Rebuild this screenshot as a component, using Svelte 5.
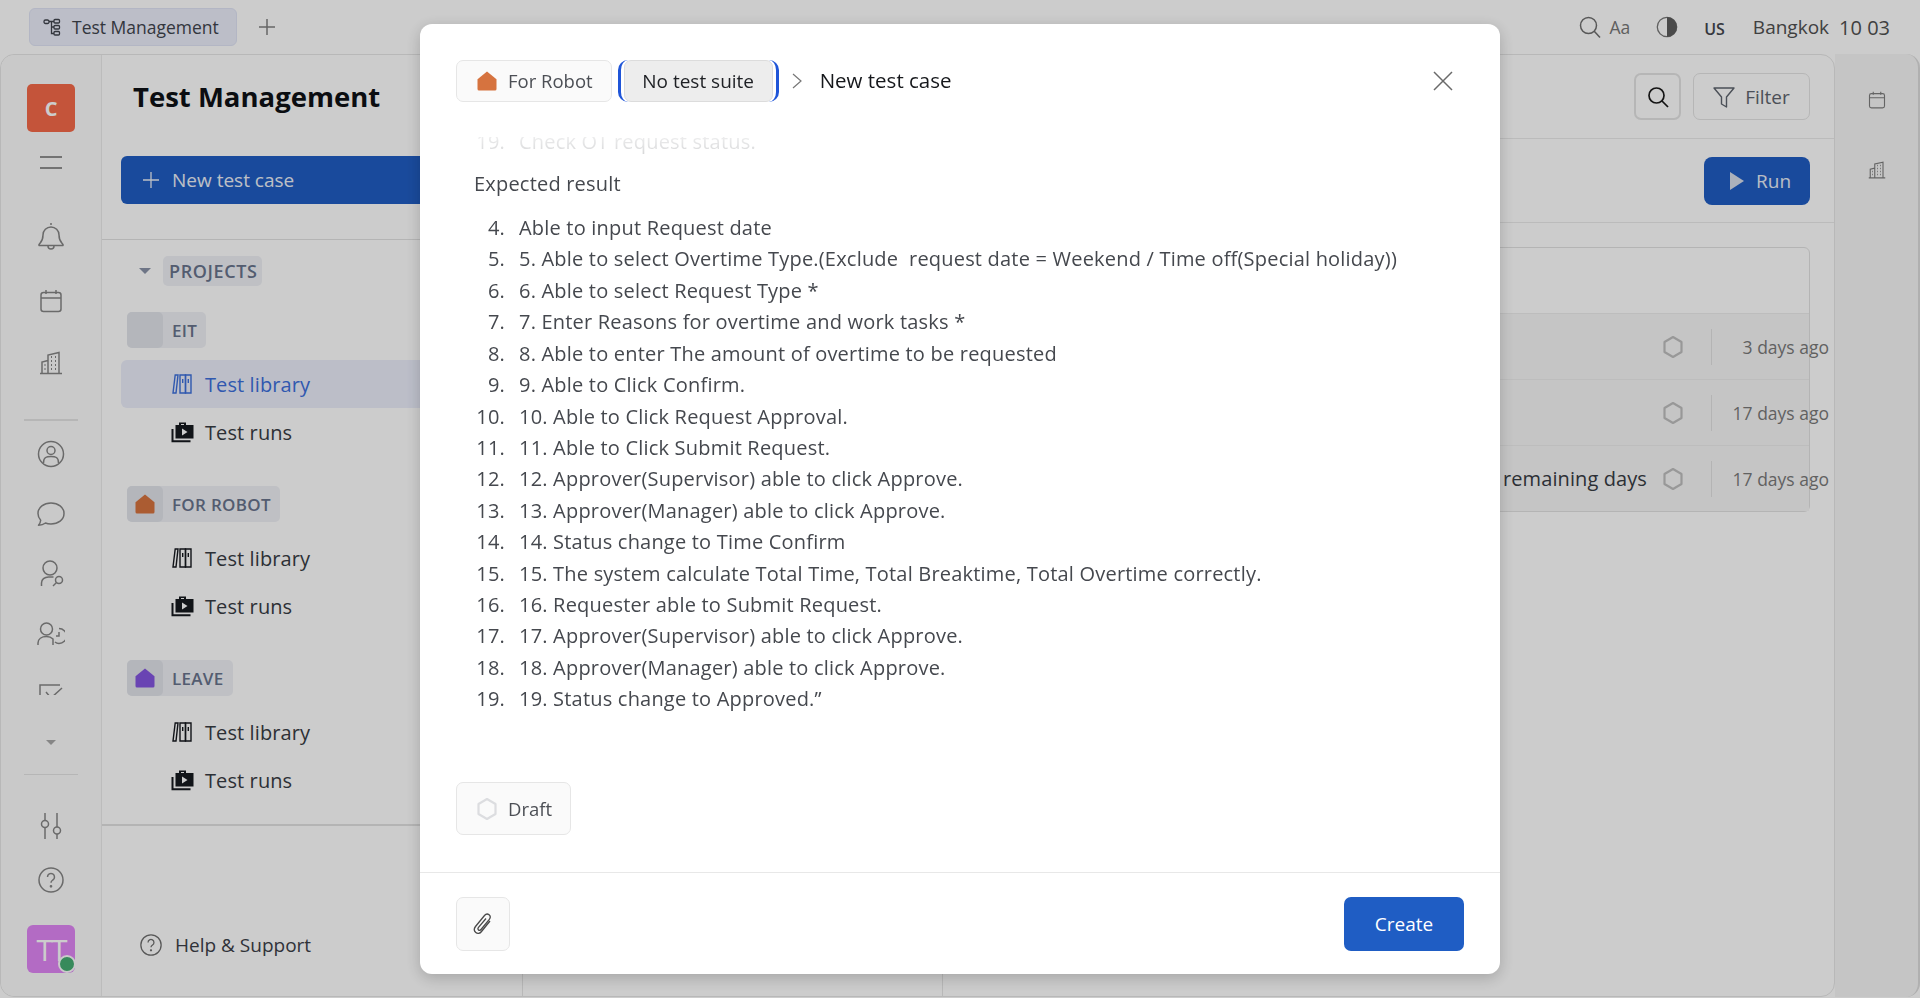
<script>
  const results = [
    'Able to input Request date',
    '5. Able to select Overtime Type.(Exclude\u00a0 request date = Weekend / Time off(Special holiday))',
    '6. Able to select Request Type *',
    '7. Enter Reasons for overtime and work tasks *',
    '8. Able to enter The amount of overtime to be requested',
    '9. Able to Click Confirm.',
    '10. Able to Click Request Approval.',
    '11. Able to Click Submit Request.',
    '12. Approver(Supervisor) able to click Approve.',
    '13. Approver(Manager) able to click Approve.',
    '14. Status change to Time Confirm',
    '15. The system calculate Total Time, Total Breaktime, Total Overtime correctly.',
    '16. Requester able to Submit Request.',
    '17. Approver(Supervisor) able to click Approve.',
    '18. Approver(Manager) able to click Approve.',
    '19. Status change to Approved.”'
  ];

  const projects = [
    { name: 'EIT', color: null, active: true },
    { name: 'FOR ROBOT', color: '#d6733f', active: false },
    { name: 'LEAVE', color: '#8456e0', active: false }
  ];

  const rows = [
    { title: '', age: '3 days ago' },
    { title: '', age: '17 days ago' },
    { title: 'remaining days', age: '17 days ago' }
  ];
</script>

{#snippet house(color, size)}
  <svg width={size} height={size} viewBox="0 0 20 20"><path d="M10 .5 19.5 8.2V18a1.5 1.5 0 0 1-1.5 1.5H2A1.5 1.5 0 0 1 .5 18V8.2Z" fill={color} /></svg>
{/snippet}

{#snippet hexagon(size, color)}
  <svg width={size} height={size} viewBox="0 0 24 24" fill="none" stroke={color} stroke-width="2.2"><path d="M12 2 20.5 7v10L12 22l-8.500-5V7Z" stroke-linejoin="round" /></svg>
{/snippet}

{#snippet library()}
  <svg width="22" height="22" viewBox="0 0 22 22" fill="none" stroke="currentColor" stroke-width="1.4"><path d="M2 20 4.200 2H7L5 20Z" /><path d="M9 2h5.500v18H9Z" /><path d="M14.500 2H20v18h-5.500Z" /><path d="M11.700 6v4M17.300 6v4" /></svg>
{/snippet}

{#snippet runs()}
  <svg width="24" height="22" viewBox="0 0 24 22"><path d="M1.500 8v12.300h18" fill="none" stroke="currentColor" stroke-width="2" /><path d="M8 4V1.500h7V4h7.500v13.500H4.500V4Zm2-1V4h3V3Z" fill="currentColor" fill-rule="evenodd" /><path d="M11 7.500 16.500 11 11 14.500Z" fill="#fff" /></svg>
{/snippet}

{#snippet calendar(size)}
  <svg width={size} height={size} viewBox="0 0 24 24" fill="none" stroke="currentColor" stroke-width="1.5"><rect x="2" y="3.500" width="20" height="19" rx="2.500" /><path d="M2 9h20M7 1v4M17 1v4" /></svg>
{/snippet}

{#snippet building(size)}
  <svg width={size} height={size} viewBox="0 0 24 24" fill="none" stroke="currentColor" stroke-width="1.5"><path d="M1 22.500h22M3 22.500V11l6-1.500M9 22.500V4l11-2.500v21" /><path d="M12 6h1M16 6h1M12 10h1M16 10h1M12 14h1M16 14h1M12 18h1M16 18h1M5.500 14h1M5.500 18h1" stroke-width="1.800" /></svg>
{/snippet}

{#snippet help(size)}
  <svg width={size} height={size} viewBox="0 0 26 26" fill="none" stroke="currentColor" stroke-width="1.500"><circle cx="13" cy="13" r="12" /><path d="M9.500 10a3.500 3.500 0 1 1 5.300 3c-1.200.8-1.800 1.400-1.800 2.800" /><circle cx="13" cy="19.300" r=".6" fill="currentColor" /></svg>
{/snippet}

<div class="page">
  <header class="topbar">
    <div class="tab">
      <svg width="18" height="18" viewBox="0 0 18 18" fill="none" stroke="currentColor" stroke-width="1.300"><rect x="1" y="2" width="5" height="3.500" rx="1.500" /><rect x="11" y="1.500" width="5.500" height="3.500" rx="1" /><rect x="11" y="7.500" width="5.500" height="3.500" rx="1" /><rect x="11" y="13.500" width="5.500" height="3.500" rx="1" /><path d="M6 3.500h5M8.500 3.500v12h2.500M8.500 9h2.500" /></svg>
      <span>Test Management</span>
    </div>
    <svg class="add-tab" width="16" height="16" viewBox="0 0 16 16" stroke="currentColor" stroke-width="1.500"><path d="M8 0v16M0 8h16" /></svg>
    <div class="top-tools">
      <svg class="tool-search" width="22" height="22" viewBox="0 0 22 22" fill="none" stroke="currentColor" stroke-width="1.500"><circle cx="9.500" cy="9.500" r="8" /><path d="m15 15 6 6.500" /></svg>
      <span class="aa">Aa</span>
      <svg class="contrast" width="22" height="22" viewBox="0 0 22 22"><circle cx="11" cy="11" r="9.700" fill="none" stroke="#777" stroke-width="1.300" /><path d="M11 1a10 10 0 0 1 0 20Z" fill="#5d5d5d" /></svg>
      <span class="lang">US</span>
      <span class="city">Bangkok</span>
      <span class="clock">10 03</span>
    </div>
  </header>

  <div class="workspace">
    <div class="main-panel">
      <nav class="rail">
        <div class="logo">C</div>
        <div class="burger"><i></i><i></i></div>

        <div class="rail-scroll">
          <div class="rail-item">
            <svg width="26" height="28" viewBox="0 0 26 28" fill="none" stroke="currentColor" stroke-width="1.500"><path d="M13 1v2M5 13a8 8 0 0 1 16 0c0 6 2 7 4 9.500v1H1v-1C3 20 5 19 5 13Z" stroke-linejoin="round" /><path d="M10 24a3 3 0 0 0 6 0" /></svg>
          </div>
          <div class="rail-item cal">{@render calendar(24)}</div>
          <div class="rail-item bld">{@render building(24)}</div>
          <div class="rail-sep thick"></div>
          <div class="rail-item">
            <svg width="28" height="28" viewBox="0 0 28 28" fill="none" stroke="currentColor" stroke-width="1.500"><circle cx="14" cy="14" r="12.500" /><circle cx="14" cy="10.500" r="4" /><path d="M6.500 23c0-6 3-6.500 7.500-6.500s7.500.5 7.500 6.500" /></svg>
          </div>
          <div class="rail-item">
            <svg width="28" height="26" viewBox="0 0 28 26" fill="none" stroke="currentColor" stroke-width="1.500"><path d="M14 2c7 0 13 4 13 10.500S21 23 14 23c-2 0-4-.3-5.500-1-1.500 1.200-4 2.300-7 2.300 1.300-1.500 2-3 2.200-5C2 17.500 1 15 1 12.500 1 6 7 2 14 2Z" stroke-linejoin="round" /></svg>
          </div>
          <div class="rail-item">
            <svg width="26" height="28" viewBox="0 0 26 28" fill="none" stroke="currentColor" stroke-width="1.500"><circle cx="12" cy="8" r="7" /><path d="M3.500 26v-3c0-3.500 3-6 7-6h5" /><circle cx="21" cy="20" r="3.500" /><path d="m18.500 22.500-3.500 3.500" /></svg>
          </div>
          <div class="rail-item">
            <svg width="28" height="24" viewBox="0 0 28 24" fill="none" stroke="currentColor" stroke-width="1.500"><circle cx="9.500" cy="7" r="6" /><path d="M1 23v-2c0-4 3.500-6.500 8.500-6.500 3 0 5 1 6.500 2.500v6" /><path d="M22 6.500a6.500 6.500 0 1 1 0 15 6 6 0 0 1-4-1.500M22 10v4h-3" /></svg>
          </div>
          <div class="rail-item">
            <svg width="26" height="24" viewBox="0 0 26 24" fill="none" stroke="currentColor" stroke-width="1.500"><path d="M2 22V3h20M8 10l5 6 11-10" /></svg>
          </div>
        </div>

        <span class="caret small"></span>
        <div class="rail-sep"></div>
        <div class="rail-item sliders">
          <svg width="24" height="28" viewBox="0 0 24 28" fill="none" stroke="currentColor" stroke-width="1.500"><path d="M6 1v8M6 15v12M18 1v14M18 22v5" /><circle cx="6" cy="12" r="3.500" /><circle cx="18" cy="18.500" r="3.500" /></svg>
        </div>
        <div class="rail-item helpme">{@render help(26)}</div>
        <div class="avatar">TT<span class="online"></span></div>
      </nav>

      <aside class="sidebar">
        <div class="sidebar-top">
          <h1>Test Management</h1>
          <button class="new-case">
            <svg width="16" height="16" viewBox="0 0 16 16" stroke="currentColor" stroke-width="1.300"><path d="M8 0v16M0 8h16" /></svg>
            New test case
          </button>
        </div>
        <div class="tree">
          <div class="projects-head">
            <span class="caret"></span>
            <span class="projects-tag">PROJECTS</span>
          </div>
          {#each projects as project}
            <div class="project">
              <div class="project-tag">
                <span class="project-icon">
                  {#if project.color}{@render house(project.color, 20)}{/if}
                </span>
                <span>{project.name}</span>
              </div>
              <div class="tree-item" class:active={project.active}>
                <span class="tree-icon">{@render library()}</span>
                Test library
              </div>
              <div class="tree-item">
                <span class="tree-icon">{@render runs()}</span>
                Test runs
              </div>
            </div>
          {/each}
        </div>
        <div class="sidebar-foot">
          <span class="foot-icon">{@render help(22)}</span>
          Help &amp; Support
        </div>
      </aside>

      <section class="suites"></section>

      <section class="detail">
        <div class="detail-head">
          <button class="icon-btn">
            <svg width="22" height="22" viewBox="0 0 22 22" fill="none" stroke="currentColor" stroke-width="1.700"><circle cx="9.500" cy="9.500" r="7.500" /><path d="m15 15 6 6" /></svg>
          </button>
          <button class="filter-btn">
            <svg width="22" height="22" viewBox="0 0 22 22" fill="none" stroke="currentColor" stroke-width="1.400"><path d="M1 2h20l-7.500 9v10l-5-3v-7Z" stroke-linejoin="round" /></svg>
            Filter
          </button>
        </div>
        <div class="run-bar">
          <button class="run-btn">
            <svg width="16" height="18" viewBox="0 0 16 18"><path d="M1 0 15 9 1 18Z" fill="#d8deea" /></svg>
            Run
          </button>
        </div>
        <div class="cases">
          <div class="cases-head"></div>
          {#each rows as row}
            <div class="case-row">
              <span class="case-title">{row.title}</span>
              <span class="case-state">{@render hexagon(24, '#bfbfbf')}</span>
              <span class="case-age">{row.age}</span>
            </div>
          {/each}
        </div>
      </section>
    </div>

    <aside class="right-rail">
      <span class="right-icon">{@render calendar(18)}</span>
      <span class="right-icon">{@render building(18)}</span>
    </aside>
  </div>
</div>

<div class="backdrop"></div>

<div class="modal">
  <header class="modal-head">
    <div class="chip">
      {@render house('#d6733f', 20)}
      For Robot
    </div>
    <div class="suite-focus"><div class="chip suite">No test suite</div></div>
    <svg class="crumb-sep" width="10" height="16" viewBox="0 0 10 16" fill="none" stroke="currentColor" stroke-width="1.200"><path d="m1 1 8 7-8 7" /></svg>
    <span class="crumb">New test case</span>
    <svg class="close" width="20" height="20" viewBox="0 0 20 20" stroke="currentColor" stroke-width="1.500"><path d="m1 1 18 18M19 1 1 19" /></svg>
  </header>

  <div class="modal-body">
    <div class="fade"></div>
    <div class="body-scroll">
      <ol class="prev"><li><span class="num">19.</span>Check OT request status.</li></ol>
      <p class="label">Expected result</p>
      <ol>
        {#each results as line, i}
          <li><span class="num">{i + 4}.</span>{line}</li>
        {/each}
      </ol>
    </div>
    <div class="chip draft">
      {@render hexagon(24, '#dcdde0')}
      Draft
    </div>
  </div>

  <footer class="modal-foot">
    <button class="attach">
      <svg width="22" height="24" viewBox="0 0 22 24" fill="none" stroke="currentColor" stroke-width="1.300"><path d="M18 9 9.500 19.500c-1.500 2-4 2.500-5.700 1-1.800-1.500-1.800-4-.3-6L12.500 3.500c1.300-1.500 3.200-1.800 4.600-.7 1.400 1.200 1.400 3 .2 4.600L9 17.500c-.7.900-1.800 1-2.500.4-.7-.6-.7-1.600 0-2.500L14 6.500" /></svg>
    </button>
    <button class="create">Create</button>
  </footer>
</div>

<style>
  :global(body) {
    margin: 0;
    font-family: "Open Sans", "Liberation Sans", sans-serif;
    color: #3c4048;
  }
  button {
    font-family: inherit;
    cursor: pointer;
  }
  .page {
    display: flex;
    flex-direction: column;
    height: 997px;
    width: 1920px;
    background: #fff;
    overflow: hidden;
  }
  .topbar {
    display: flex;
    align-items: center;
    height: 54px;
    flex: none;
    padding-left: 29px;
  }
  .tab {
    display: flex;
    align-items: center;
    gap: 11px;
    width: 208px;
    height: 38px;
    box-sizing: border-box;
    padding-left: 13px;
    border: 1px solid #e0e4f6;
    border-radius: 6px;
    background: #ebeefb;
    font-size: 17.500px;
    font-weight: 500;
    color: #40444d;
  }
  .add-tab {
    margin-left: 22px;
    color: #808080;
  }
  .top-tools {
    display: flex;
    align-items: center;
    margin-left: auto;
    padding-right: 30px;
    color: #6e6e6e;
  }
  .aa {
    margin-left: 8px;
    font-size: 17.500px;
    color: #777;
  }
  .contrast {
    margin-left: 26px;
  }
  .lang {
    margin-left: 26px;
    margin-top: 4px;
    font-size: 16px;
    font-weight: 600;
    color: #44474e;
  }
  .city {
    margin-left: 28px;
    font-size: 19px;
    color: #505050;
  }
  .clock {
    margin-left: 10px;
    font-size: 20px;
    color: #505050;
  }
  .workspace {
    display: flex;
    flex: 1;
    min-height: 0;
  }
  .main-panel {
    display: flex;
    width: 1835px;
    box-sizing: border-box;
    border: 1px solid #e6e6e6;
    border-radius: 14px;
  }
  .rail {
    display: flex;
    flex-direction: column;
    align-items: center;
    width: 101px;
    flex: none;
    box-sizing: border-box;
    padding-top: 29px;
    background: #fcfcfc;
    border-right: 1px solid #ececec;
    border-radius: 14px 0 0 14px;
    color: #858585;
  }
  .logo {
    display: flex;
    align-items: center;
    justify-content: center;
    width: 48px;
    height: 48px;
    border-radius: 5px;
    background: #f66a49;
    color: #fff;
    font-size: 20px;
    font-weight: 700;
  }
  .burger {
    display: flex;
    flex-direction: column;
    gap: 9px;
    margin-top: 24px;
  }
  .burger i {
    display: block;
    width: 22px;
    height: 2px;
    background: #909090;
  }
  .rail-scroll {
    display: flex;
    flex-direction: column;
    align-items: center;
    height: 489px;
    margin-top: 37px;
    overflow: hidden;
  }
  .rail-item {
    display: flex;
    align-items: center;
    justify-content: center;
    height: 60px;
    flex: none;
  }
  .rail-item.cal {
    height: 70px;
  }
  .rail-item.bld {
    height: 54px;
  }
  .rail-sep {
    width: 54px;
    height: 1px;
    flex: none;
    background: #e4e4e4;
    margin-top: 29px;
  }
  .rail-sep.thick {
    height: 2px;
    margin: 29px 0 3px;
  }
  .caret {
    width: 0;
    height: 0;
    border-left: 6px solid transparent;
    border-right: 6px solid transparent;
    border-top: 6px solid #8a93a8;
  }
  .caret.small {
    margin-top: 45px;
    border-left-width: 5px;
    border-right-width: 5px;
    border-top-width: 5px;
    border-top-color: #a8a8a8;
  }
  .sliders {
    margin-top: 21px;
  }
  .helpme {
    height: 48px;
  }
  .avatar {
    position: relative;
    display: flex;
    align-items: center;
    justify-content: center;
    width: 48px;
    height: 48px;
    margin-top: 21px;
    border-radius: 6px;
    background: #e086f5;
    color: #fff;
    font-size: 30px;
    font-weight: 500;
    letter-spacing: -2px;
  }
  .online {
    position: absolute;
    right: -1px;
    bottom: 0;
    width: 14px;
    height: 14px;
    border: 2px solid #fcfcfc;
    border-radius: 50%;
    background: #45ad72;
  }
  .sidebar {
    display: flex;
    flex-direction: column;
    width: 421px;
    flex: none;
    box-sizing: border-box;
    border-right: 1px solid #e6e6e6;
  }
  .sidebar-top {
    height: 185px;
    flex: none;
    box-sizing: border-box;
    padding: 24px 0 0 19px;
    border-bottom: 1px solid #e2e2e2;
  }
  h1 {
    margin: 0;
    padding-left: 12px;
    font-size: 27.500px;
    line-height: 36px;
    font-weight: 700;
    color: #0e1116;
  }
  .new-case {
    display: flex;
    align-items: center;
    gap: 13px;
    width: 100%;
    height: 48px;
    margin-top: 41px;
    padding-left: 22px;
    border: 0;
    border-radius: 6px 0 0 6px;
    background: #205dc3;
    color: #ecf0f8;
    font-size: 19px;
  }
  .tree {
    flex: 1;
    padding: 16px 0 0 19px;
  }
  .projects-head {
    display: flex;
    align-items: center;
    gap: 12px;
    height: 30px;
    padding-left: 18px;
  }
  .projects-tag {
    display: flex;
    align-items: center;
    height: 30px;
    padding: 0 5px 0 6px;
    border-radius: 5px;
    background: #eff1f6;
    color: #68738c;
    font-size: 18px;
    font-weight: 600;
    letter-spacing: 0.6px;
  }
  .project {
    margin-top: 26px;
  }
  .project + .project {
    margin-top: 30px;
  }
  .project-tag {
    display: flex;
    align-items: center;
    width: fit-content;
    height: 36px;
    margin-left: 6px;
    padding-right: 9px;
    border-radius: 5px;
    background: #eff1f6;
    color: #68738c;
    font-size: 17px;
    font-weight: 600;
    letter-spacing: 0.3px;
    gap: 9px;
  }
  .project-icon {
    display: flex;
    align-items: center;
    justify-content: center;
    width: 36px;
    height: 36px;
    border-radius: 5px;
    background: #e2e4ea;
  }
  .tree-item {
    display: flex;
    align-items: center;
    height: 48px;
    padding-left: 50px;
    font-size: 20px;
    letter-spacing: 0.1px;
    color: #383c44;
  }
  .project-tag + .tree-item {
    margin-top: 12px;
  }
  .tree-icon {
    display: flex;
    width: 34px;
    flex: none;
    color: #16191f;
  }
  .tree-item.active {
    border-radius: 6px 0 0 6px;
    background: #ebeefb;
    color: #3c6fdb;
  }
  .tree-item.active .tree-icon {
    color: #3c6fdb;
  }
  .sidebar-foot {
    display: flex;
    align-items: center;
    gap: 13px;
    height: 172px;
    flex: none;
    box-sizing: border-box;
    padding: 68px 0 0 38px;
    border-top: 2px solid #e2e2e2;
    font-size: 19px;
    color: #3c4048;
  }
  .foot-icon {
    display: flex;
    color: #6e6e6e;
  }
  .suites {
    width: 419px;
    flex: none;
    border-right: 1px solid #e6e6e6;
  }
  .detail {
    flex: 1;
    min-width: 0;
    display: flex;
    flex-direction: column;
  }
  .detail-head {
    display: flex;
    justify-content: flex-end;
    gap: 12px;
    height: 84px;
    flex: none;
    box-sizing: border-box;
    padding: 18px 24px 0 0;
    border-bottom: 1px solid #eaeaea;
  }
  .icon-btn,
  .filter-btn {
    display: flex;
    align-items: center;
    justify-content: center;
    height: 47px;
    background: #fff;
    border: 1px solid #e4e4e4;
    border-radius: 7px;
    color: #1a1a1a;
  }
  .icon-btn {
    width: 47px;
    border-width: 2px;
    padding: 0;
  }
  .filter-btn {
    gap: 10px;
    width: 117px;
    font-size: 19px;
    color: #5e646e;
  }
  .run-bar {
    display: flex;
    justify-content: flex-end;
    height: 84px;
    flex: none;
    box-sizing: border-box;
    padding: 18px 24px 0 0;
    border-bottom: 1px solid #eaeaea;
  }
  .run-btn {
    display: flex;
    align-items: center;
    gap: 11px;
    width: 106px;
    height: 48px;
    padding-left: 25px;
    border: 0;
    border-radius: 8px;
    background: #205dc3;
    color: #e8edf7;
    font-size: 19px;
  }
  .cases {
    margin: 24px 24px 0 0;
    border: 1px solid #e2e2e2;
    border-radius: 6px;
  }
  .cases-head {
    height: 65px;
  }
  .case-row {
    display: flex;
    align-items: center;
    height: 65px;
    background: #f7f7f7;
    border-top: 1px solid #ededed;
  }
  .case-row:first-of-type {
    border-top: 0;
  }
  .case-title {
    flex: 1;
    text-align: right;
    padding-right: 14px;
    font-size: 20px;
    letter-spacing: 0.1px;
    color: #383c44;
  }
  .case-state {
    display: flex;
    align-items: center;
    padding-right: 26px;
    border-right: 1px solid #e2e2e2;
    height: 36px;
  }
  .case-age {
    width: 117px;
    margin-right: -20px;
    white-space: nowrap;
    text-align: right;
    font-size: 17.500px;
    color: #7a7a7a;
  }
  .right-rail {
    flex: 1;
    display: flex;
    flex-direction: column;
    align-items: center;
    padding-top: 37px;
    gap: 52px;
    background: #f7f7f7;
    border-right: 2px solid #dcdcdc;
    border-radius: 0 14px 14px 0;
    color: #7e7e7e;
  }
  .right-icon {
    display: flex;
  }
  .backdrop {
    position: fixed;
    inset: 0;
    background: rgba(0, 0, 0, 0.2);
  }
  .modal {
    position: fixed;
    left: 420px;
    top: 24px;
    width: 1080px;
    height: 950px;
    display: flex;
    flex-direction: column;
    border-radius: 12px;
    background: #fff;
    box-shadow: 0 4px 16px rgba(0, 0, 0, 0.2);
    overflow: hidden;
  }
  .modal-head {
    display: flex;
    align-items: center;
    height: 113px;
    flex: none;
    box-sizing: border-box;
    padding: 0 36px 0 36px;
  }
  .chip {
    display: flex;
    align-items: center;
    gap: 11px;
    height: 42px;
    box-sizing: border-box;
    padding: 0 18px 0 20px;
    border: 1px solid #e6e6e6;
    border-radius: 7px;
    background: #fafafa;
    font-size: 18.500px;
    color: #4c4f55;
  }
  .suite-focus {
    display: flex;
    margin-left: 6px;
    padding: 0 3px;
    border-left: 3px solid #1f55d8;
    border-right: 3px solid #1f55d8;
    border-radius: 10px;
  }
  .suite {
    width: 149px;
    padding: 0;
    justify-content: center;
    background: #ededed;
    border-color: #dcdcdc;
    color: #1e2024;
    font-size: 19px;
  }
  .crumb-sep {
    margin-left: 13px;
    color: #777;
  }
  .crumb {
    margin-left: 18px;
    font-size: 20.500px;
    color: #15171b;
    margin-bottom: 2px;
  }
  .close {
    margin-left: auto;
    margin-right: 11px;
    color: #6a6a6a;
  }
  .modal-body {
    position: relative;
    flex: 1;
    min-height: 0;
    display: flex;
    flex-direction: column;
    overflow: hidden;
  }
  .fade {
    position: absolute;
    left: 0;
    right: 0;
    top: 0;
    height: 30px;
    background: linear-gradient(rgba(255, 255, 255, 0.9), rgba(255, 255, 255, 0.7));
  }
  .body-scroll {
    flex: 1;
    min-height: 0;
    margin-top: -11px;
    padding: 0 54px;
    font-size: 20px;
    letter-spacing: 0.2px;
    line-height: 31.420px;
    color: #45484e;
  }
  .body-scroll ol {
    margin: 0;
    padding: 0;
    list-style: none;
  }
  .body-scroll li {
    display: flex;
  }
  .num {
    flex: none;
    width: 31px;
    margin-right: 14px;
    text-align: right;
  }
  .label {
    margin: 0;
    padding: 10px 0 0;
    height: 44px;
  }
  .prev {
    height: 32px;
  }
  .draft {
    align-self: flex-start;
    width: 115px;
    height: 53px;
    margin: 0 0 37px 36px;
    padding: 0 0 0 18px;
    gap: 9px;
  }
  .modal-foot {
    display: flex;
    align-items: flex-start;
    justify-content: space-between;
    height: 102px;
    flex: none;
    box-sizing: border-box;
    padding: 24px 36px 0;
    border-top: 1px solid #e8e8e8;
  }
  .attach {
    display: flex;
    align-items: center;
    justify-content: center;
    width: 54px;
    height: 54px;
    padding: 0;
    border: 1px solid #e6e6e6;
    border-radius: 7px;
    background: #fafafa;
    color: #4a4a4a;
  }
  .create {
    width: 120px;
    height: 54px;
    border: 0;
    border-radius: 7px;
    background: #1f5dc4;
    color: #fff;
    font-size: 19px;
  }
</style>
